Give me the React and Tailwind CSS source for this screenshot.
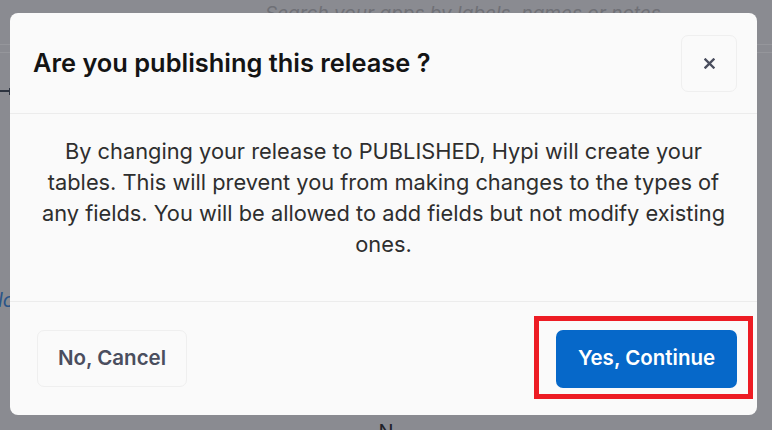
export default function App() {
  return (
    <div
      className="relative w-[772px] h-[430px] overflow-hidden bg-[#8a8b91]"
      style={{ fontFamily: "Inter, 'Noto Sans', sans-serif" }}
    >
      {/* dimmed page behind */}
      <div className="flex flex-col w-full h-full">
        <div className="h-[44px] pl-[265px] pt-[2px] text-[19px] italic text-[#6f7076] leading-[24px] whitespace-nowrap">
          Search your apps by labels, names or notes
        </div>
        <div className="h-[9px] border-t border-b border-[#95969b]" />
        <div className="h-[37px]" />
        <div className="flex items-center h-[2px]">
          <div className="w-[9px] h-[2px] bg-[#2d3440]" />
          <div className="w-[2px] h-[7px] bg-[#2d3440]" />
        </div>
        <div className="h-[196px]" />
        <div className="text-[20px] italic text-[#2a5588] leading-[24px] -ml-[2px]">lo</div>
        <div className="flex-1" />
        <div className="flex justify-center h-[8px]">
          <span className="text-[20px] leading-[20px] text-[#1f2229]">N</span>
        </div>
      </div>

      {/* modal */}
      <div className="absolute left-[10px] top-[13px] w-[747px] h-[402px] rounded-[8px] bg-[#fafafa] flex flex-col">
        <div className="h-[101px] shrink-0 flex items-center justify-between pl-[23px] pr-[20px] border-b border-[#ececec]">
          <h2 className="text-[25.4px] font-semibold text-[#141414] leading-[30px]">
            Are you publishing this release ?
          </h2>
          <button className="w-[56px] h-[57px] rounded-[7px] border border-[#efefef] flex items-center justify-center">
            <svg width="11" height="11" viewBox="0 0 11 11">
              <path d="M1.5 1.5 L9.5 9.5 M9.5 1.5 L1.5 9.5" stroke="#4a4e5e" strokeWidth="2.4" strokeLinecap="square" />
            </svg>
          </button>
        </div>
        <div className="h-[188px] shrink-0 flex justify-center pt-[22px] border-b border-[#ececec]">
          <p className="w-[698px] text-center text-[21.8px] leading-[31px] text-[#2e2e2e]">
            By changing your release to PUBLISHED, Hypi will create your tables. This will prevent you from making changes to the types of any fields. You will be allowed to add fields but not modify existing ones.
          </p>
        </div>
        <div className="flex-1 flex items-center justify-between pl-[27px] pr-[20px]">
          <button className="w-[150px] h-[57px] rounded-[7px] border border-[#efefef] text-[20.5px] font-semibold text-[#4a4e5e]">
            No, Cancel
          </button>
          <button className="w-[181px] h-[58px] rounded-[7px] bg-[#0668c9] text-[20.5px] font-semibold text-white">
            Yes, Continue
          </button>
        </div>
      </div>

      {/* red highlight annotation */}
      <div className="absolute left-[534px] top-[316px] w-[219px] h-[83px] border-[5px] border-[#ed1c24]" />
    </div>
  );
}
